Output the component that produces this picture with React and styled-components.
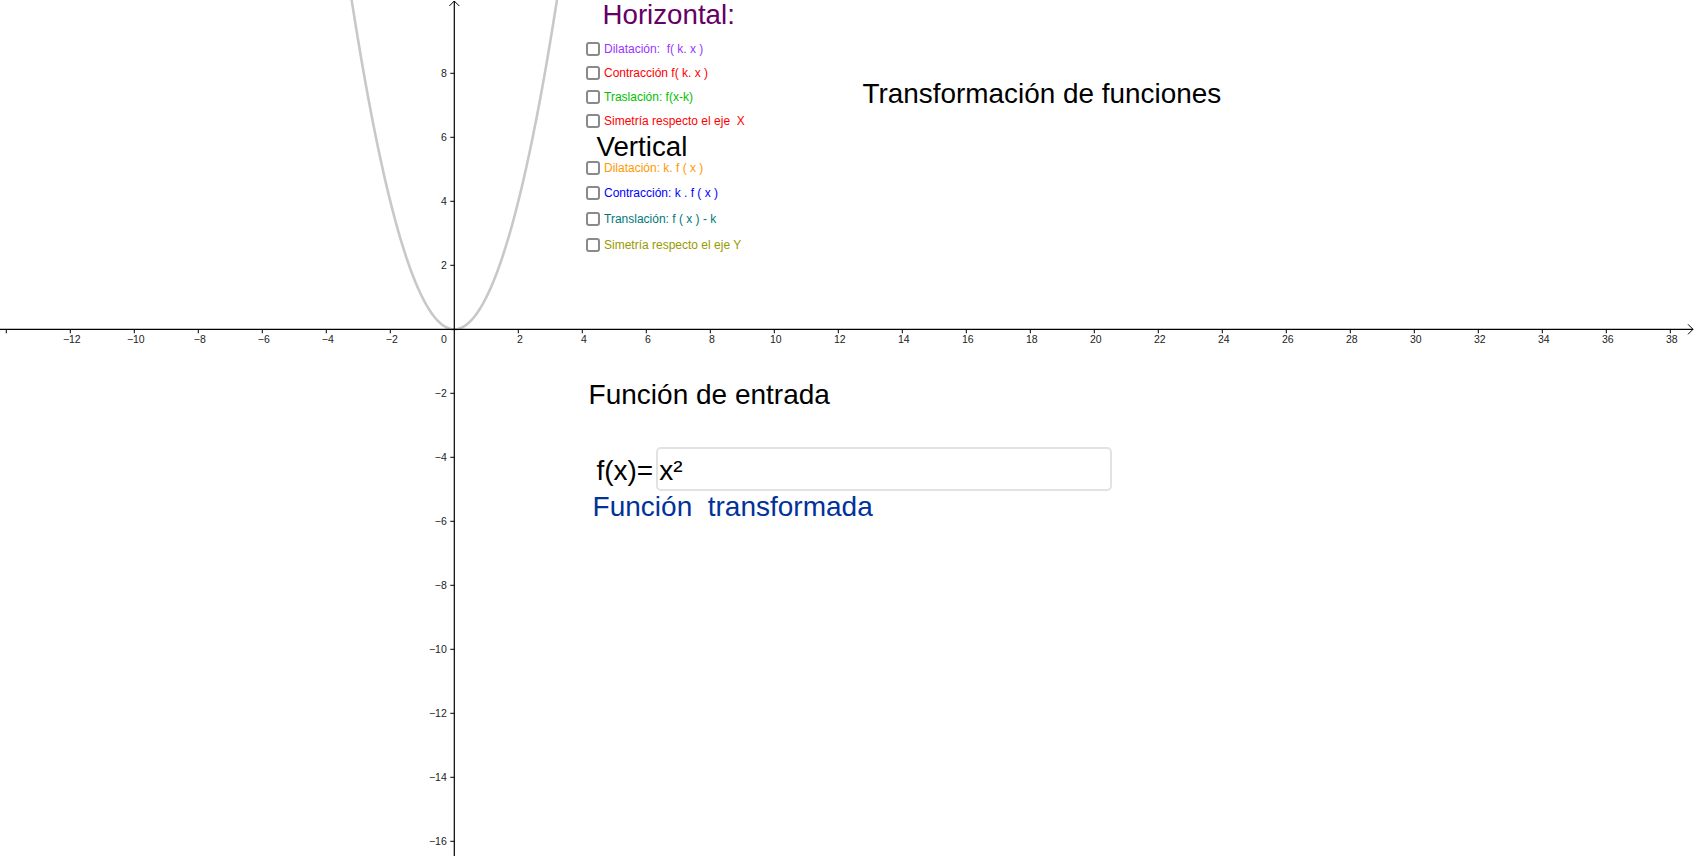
import React from "react";
import styled, { createGlobalStyle } from "styled-components";

// graph origin and unit (px per unit) on the canvas
const OX = 454.3;
const OY = 329.3;
const U = 32;

const horizontal = [
  { label: "Dilatación:  f( k. x )", color: "#9933ff" },
  { label: "Contracción f( k. x )", color: "#ff0000" },
  { label: "Traslación: f(x-k)", color: "#00c000" },
  { label: "Simetría respecto el eje  X", color: "#ff0000" },
];

const vertical = [
  { label: "Dilatación: k. f ( x )", color: "#ff9900" },
  { label: "Contracción: k . f ( x )", color: "#0000ff" },
  { label: "Translación: f ( x ) - k", color: "#007878" },
  { label: "Simetría respecto el eje Y", color: "#999900" },
];

const GlobalStyle = createGlobalStyle`
  html, body {
    margin: 0;
    padding: 0;
    background: #ffffff;
    overflow: hidden;
  }
  body {
    font-family: "Liberation Sans", Arial, sans-serif;
  }
`;

function Graph() {
  const xs = [];
  for (let k = -14; k <= 38; k += 2) if (k !== 0) xs.push(k);
  const ys = [];
  for (let k = 8; k >= -16; k -= 2) if (k !== 0) ys.push(k);

  const pts = [];
  for (let x = -3.4; x <= 3.4001; x += 0.05) {
    pts.push(`${(OX + U * x).toFixed(2)},${(OY - U * x * x).toFixed(2)}`);
  }

  return (
    <Plot viewBox="0 0 1696 856" width="1696" height="856">
      <polyline points={pts.join(" ")} fill="none" stroke="#c8c8c8" strokeWidth="2.6" />
      <line x1="0" y1={OY} x2="1693" y2={OY} stroke="#000" strokeWidth="1.2" />
      <path d={`M1688 ${OY - 5} L1693 ${OY} L1688 ${OY + 5}`} fill="none" stroke="#000" strokeWidth="1" />
      <line x1={OX} y1="1" x2={OX} y2="856" stroke="#000" strokeWidth="1.2" />
      <path d={`M${OX - 5} 6 L${OX} 1 L${OX + 5} 6`} fill="none" stroke="#000" strokeWidth="1" />
      {xs.map((k) => {
        const x = OX + U * k;
        return (
          <g key={"x" + k}>
            <line x1={x} y1={OY} x2={x} y2={OY + 4} stroke="#000" strokeWidth="1" />
            {k >= -12 && (
              <AxisLabel x={x + 1.5} y={OY + 14} textAnchor="middle">
                {k < 0 ? "\u2212" + -k : k}
              </AxisLabel>
            )}
          </g>
        );
      })}
      {ys.map((k) => {
        const y = OY - U * k;
        return (
          <g key={"y" + k}>
            <line x1={OX - 4} y1={y} x2={OX} y2={y} stroke="#000" strokeWidth="1" />
            <AxisLabel x={OX - 7.5} y={y + 3.8} textAnchor="end">
              {k < 0 ? "\u2212" + -k : k}
            </AxisLabel>
          </g>
        );
      })}
      <AxisLabel x={OX - 7.5} y={OY + 14} textAnchor="end">0</AxisLabel>
    </Plot>
  );
}

function CheckRow({ label, color, h }) {
  return (
    <Row $h={h}>
      <Box />
      <RowText $color={color}>{label}</RowText>
    </Row>
  );
}

export default function App() {
  return (
    <>
      <GlobalStyle />
      <Canvas>
        <Graph />

        <Panel>
          <Heading $color="#660066" $indent={17} $pad={1.4} $h={37} $size={27.7}>
            Horizontal:
          </Heading>
          {horizontal.map((r) => (
            <CheckRow key={r.label} {...r} h={24} />
          ))}
          <Heading $color="#000000" $indent={11} $pad={0} $h={22} $size={27.7}>
            Vertical
          </Heading>
          {vertical.map((r) => (
            <CheckRow key={r.label} {...r} h={25.6} />
          ))}
        </Panel>

        <Title>Transformación de funciones</Title>

        <InputGroup>
          <Caption>Función de entrada</Caption>
          <FieldRow>
            <FieldLabel>f(x)=</FieldLabel>
            <Field>x²</Field>
          </FieldRow>
          <Result>Función  transformada</Result>
        </InputGroup>
      </Canvas>
    </>
  );
}

const Canvas = styled.div`
  position: relative;
  width: 100vw;
  height: 100vh;
  overflow: hidden;
  background: #ffffff;
`;

const Plot = styled.svg`
  position: absolute;
  left: 0;
  top: 0;
  display: block;
`;

const AxisLabel = styled.text`
  font-family: "Liberation Sans", Arial, sans-serif;
  font-size: 10.5px;
  fill: #222;
`;

const Panel = styled.div`
  position: absolute;
  left: 585.5px;
  top: 0;
  width: 220px;
  display: flex;
  flex-direction: column;
`;

const Heading = styled.div`
  height: ${(p) => p.$h}px;
  padding-top: ${(p) => p.$pad}px;
  padding-left: ${(p) => p.$indent}px;
  box-sizing: border-box;
  font-size: ${(p) => p.$size}px;
  line-height: 28px;
  color: ${(p) => p.$color};
  white-space: nowrap;
`;

const Row = styled.div`
  height: ${(p) => p.$h}px;
  display: flex;
  align-items: center;
  gap: 4.5px;
`;

const Box = styled.span`
  width: 14px;
  height: 14px;
  box-sizing: border-box;
  border: 2px solid #8a8a8a;
  border-radius: 3px;
  background: #ffffff;
  flex: none;
`;

const RowText = styled.span`
  font-size: 12px;
  line-height: 14px;
  color: ${(p) => p.$color};
  white-space: pre;
`;

const Title = styled.div`
  position: absolute;
  left: 862.5px;
  top: 80.4px;
  font-size: 27.9px;
  line-height: 28px;
  color: #000000;
  white-space: nowrap;
`;

const InputGroup = styled.div`
  position: absolute;
  left: 588.6px;
  top: 381.4px;
  display: flex;
  flex-direction: column;
  align-items: flex-start;
`;

const Caption = styled.div`
  font-size: 28px;
  line-height: 28px;
  color: #000000;
  white-space: nowrap;
`;

const FieldRow = styled.div`
  margin-top: 37.6px;
  margin-left: 7.8px;
  display: flex;
  align-items: baseline;
  gap: 3px;
`;

const FieldLabel = styled.span`
  font-size: 28px;
  line-height: 28px;
  color: #000000;
`;

const Field = styled.div`
  width: 456px;
  height: 44px;
  box-sizing: border-box;
  border: 2px solid #e2e2e2;
  border-radius: 5px;
  padding: 8.3px 0 0 1px;
  font-size: 28px;
  line-height: 28px;
  color: #000000;
`;

const Result = styled.div`
  margin-top: 2.1px;
  margin-left: 4px;
  font-size: 28px;
  line-height: 28px;
  color: #003399;
  white-space: pre;
`;
